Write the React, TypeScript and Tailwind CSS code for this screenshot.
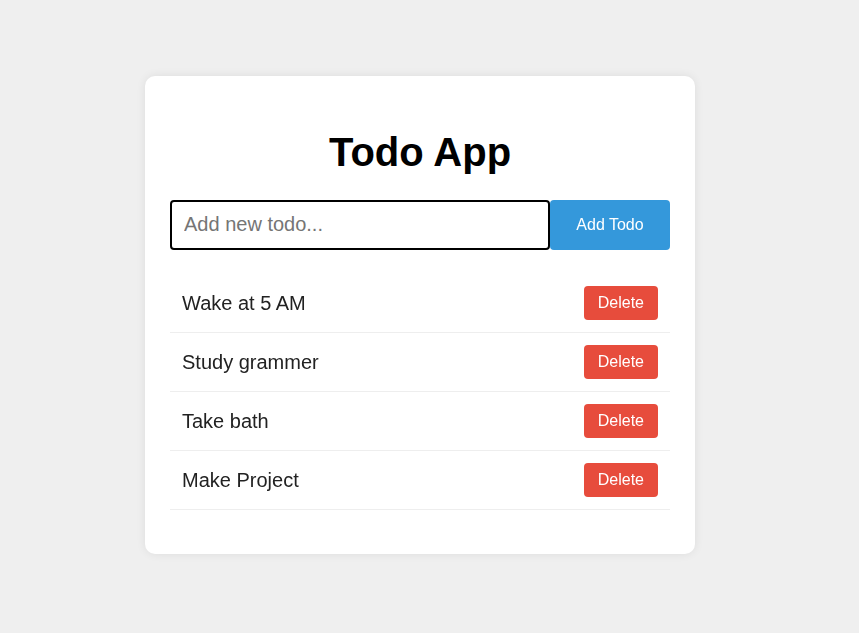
import React, { useState } from "react";

const INITIAL = ["Wake at 5 AM", "Study grammer", "Take bath", "Make Project"];

function TodoItem({ text, onDelete }: { text: string; onDelete: () => void }) {
  return (
    <li className="flex items-center justify-between border-b border-[#eeeeee] px-3 py-3">
      <span className="text-[20px] text-[#222222]">{text}</span>
      <button
        onClick={onDelete}
        className="rounded-[4px] bg-[#e74c3c] px-[14px] py-2 text-[16px] leading-[18px] text-white"
      >
        Delete
      </button>
    </li>
  );
}

export default function App() {
  const [todos, setTodos] = useState(INITIAL);
  const [value, setValue] = useState("");

  const add = () => {
    if (!value.trim()) return;
    setTodos([...todos, value.trim()]);
    setValue("");
  };

  return (
    <div className="min-h-screen bg-[#efefef] font-['Liberation_Sans',Arial,sans-serif]">
      <div className="flex min-h-screen w-[840px] items-center justify-center pb-1">
        <div className="w-[550px] rounded-[10px] bg-white px-[25px] pb-[25px] pt-[53px] shadow-[0_0_10px_rgba(0,0,0,0.08)]">
          <h1 className="mb-[25px] text-center text-[40px] font-bold leading-[46px] text-black">Todo App</h1>
          <div className="flex">
            <input
              autoFocus
              value={value}
              onChange={(e) => setValue(e.target.value)}
              placeholder="Add new todo..."
              className="h-[50px] flex-1 rounded-[4px] border-2 border-black px-3 text-[20px] text-[#222222] outline-none placeholder:text-[#757575]"
            />
            <button onClick={add} className="h-[50px] w-[120px] rounded-[4px] bg-[#3498db] text-[16px] text-white">
              Add Todo
            </button>
          </div>
          <ul className="mt-[24px] mb-[19px]">
            {todos.map((t, i) => (
              <TodoItem key={i} text={t} onDelete={() => setTodos(todos.filter((_, j) => j !== i))} />
            ))}
          </ul>
        </div>
      </div>
    </div>
  );
}
